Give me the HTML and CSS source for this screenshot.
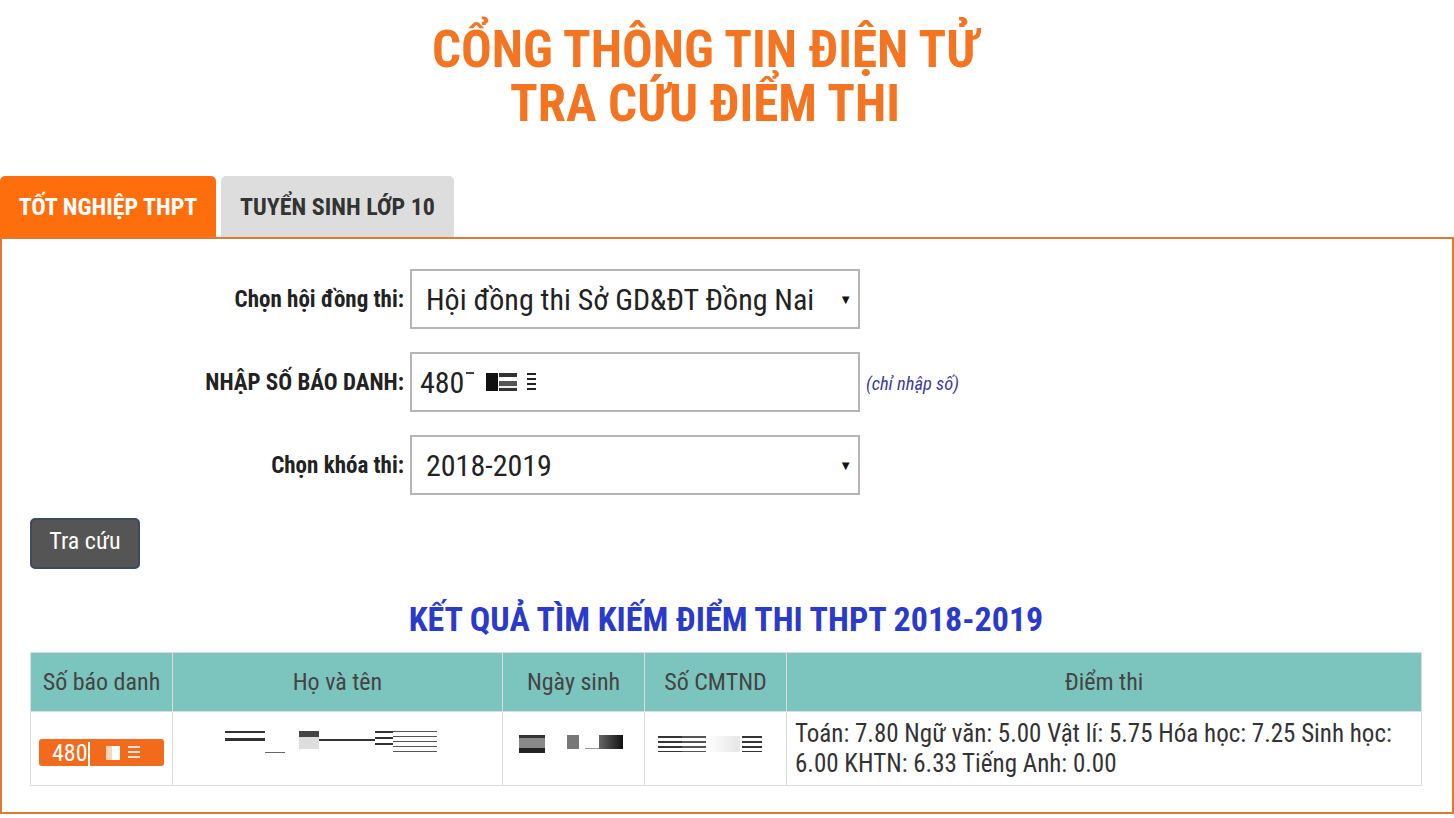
FILE: index.html
```html
<!DOCTYPE html>
<html lang="vi">
<head>
<meta charset="utf-8">
<title>Tra cứu điểm thi</title>
<link rel="stylesheet" href="styles.css">
</head>
<body>
<header class="site-title">
  <h1>CỔNG THÔNG TIN ĐIỆN TỬ<br>TRA CỨU ĐIỂM THI</h1>
</header>

<nav class="tabs">
  <a class="tab tab-active">TỐT NGHIỆP THPT</a>
  <a class="tab tab-idle">TUYỂN SINH LỚP 10</a>
</nav>

<section class="panel">
  <form class="form-grid">
    <label class="label">Chọn hội đồng thi:</label>
    <div class="select-wrap">
      <select class="control">
        <option>Hội đồng thi Sở GD&amp;ĐT Đồng Nai</option>
      </select>
    </div>
    <span></span>

    <label class="label">NHẬP SỐ BÁO DANH:</label>
    <div class="control field">480<span class="mark-bar"></span><span class="blk blk-a"></span><span class="blk blk-b"></span><span class="blk blk-c"></span></div>
    <span class="hint">(chỉ nhập số)</span>

    <label class="label">Chọn khóa thi:</label>
    <div class="select-wrap">
      <select class="control">
        <option>2018-2019</option>
      </select>
    </div>
    <span></span>
  </form>

  <button class="btn" type="button">Tra cứu</button>

  <h2 class="result-title">KẾT QUẢ TÌM KIẾM ĐIỂM THI THPT 2018-2019</h2>

  <table class="result">
    <thead>
      <tr>
        <th class="c1">Số báo danh</th>
        <th class="c2">Họ và tên</th>
        <th class="c3">Ngày sinh</th>
        <th class="c4">Số CMTND</th>
        <th class="c5">Điểm thi</th>
      </tr>
    </thead>
    <tbody>
      <tr>
        <td class="center"><span class="badge">480<span class="badge-cut"></span><span class="bw bw1"></span><span class="bw bw2"></span></span></td>
        <td class="center"><span class="redact name"><i class="r r1"></i><i class="r r2"></i><i class="r r3"></i><i class="r r4"></i><i class="r r5"></i><i class="r r6"></i></span></td>
        <td class="center"><span class="redact dob"><i class="r d1"></i><i class="r d2"></i><i class="r d3"></i><i class="r d4"></i></span></td>
        <td class="center"><span class="redact id"><i class="r i1"></i><i class="r i2"></i><i class="r i3"></i><i class="r i4"></i></span></td>
        <td class="scores">Toán: 7.80 Ngữ văn: 5.00 Vật lí: 5.75 Hóa học: 7.25 Sinh học: 6.00 KHTN: 6.33 Tiếng Anh: 0.00</td>
      </tr>
    </tbody>
  </table>
</section>
</body>
</html>
```

FILE: styles.css
```css
* { box-sizing: border-box; }

html, body {
  margin: 0;
  padding: 0;
  background: #fff;
}

body {
  font-family: "Roboto Condensed", "Liberation Sans Narrow", Roboto, sans-serif;
  color: #222;
  width: 1454px;
  overflow: hidden;
}

.site-title {
  padding: 23px 44px 0 0;
  text-align: center;
}

.site-title h1 {
  margin: 0;
  font-size: 51px;
  line-height: 54px;
  font-weight: 700;
  color: #f47521;
}

.tabs {
  display: flex;
  gap: 5px;
  margin-top: 45px;
  height: 61px;
}

.tab {
  display: flex;
  align-items: center;
  justify-content: center;
  height: 61px;
  font-size: 24px;
  font-weight: 700;
  border-radius: 5px 5px 0 0;
}

.tab-active {
  width: 216px;
  background: #ff6e0c;
  color: #fff;
}

.tab-idle {
  width: 233px;
  background: #dddddd;
  color: #333;
}

.panel {
  border: 2px solid #e07934;
  height: 577px;
  padding: 30px 30px 0 28px;
}

.form-grid {
  display: grid;
  grid-template-columns: 374px 450px auto;
  column-gap: 6px;
  row-gap: 23px;
  align-items: center;
}

.label {
  text-align: right;
  font-size: 23px;
  font-weight: 700;
  color: #222;
}

.select-wrap {
  position: relative;
}

.select-wrap::after {
  content: "▼";
  position: absolute;
  right: 8px;
  top: 50%;
  transform: translateY(-50%);
  font-size: 13px;
  color: #111;
  pointer-events: none;
}

.control {
  display: flex;
  align-items: center;
  width: 450px;
  height: 60px;
  border: 2px solid #b5b5b5;
  background: #fff;
  padding: 0 14px;
  font-family: inherit;
  font-size: 30px;
  color: #222;
  appearance: none;
  -webkit-appearance: none;
  border-radius: 0;
  margin: 0;
}

.field {
  padding-left: 8px;
}

.mark-bar {
  display: inline-block;
  width: 8px;
  height: 2px;
  background: #444;
  margin: 0 0 18px 2px;
}

.blk {
  display: inline-block;
  height: 18px;
}

.blk-a {
  width: 12px;
  margin-left: 12px;
  background: #111;
}

.blk-b {
  width: 18px;
  margin-left: 1px;
  background: linear-gradient(#333 0 25%, #fff 25% 45%, #555 45% 70%, #eee 70% 85%, #333 85%);
}

.blk-c {
  width: 9px;
  margin-left: 10px;
  background: repeating-linear-gradient(#222 0 2px, #fff 2px 5px);
}

.hint {
  font-size: 18.5px;
  font-style: italic;
  color: #3b3b9e;
  padding-top: 4px;
}

.btn {
  display: block;
  margin-top: 23px;
  width: 110px;
  height: 51px;
  background: #555;
  color: #fff;
  border: 2px solid #3c4c5c;
  border-radius: 5px;
  font-family: inherit;
  font-size: 24px;
  padding: 0 0 5px;
}

.result-title {
  margin: 30px 0 0;
  height: 53px;
  text-align: center;
  font-size: 34px;
  line-height: 40px;
  font-weight: 700;
  color: #2b3bc9;
}

.result {
  width: 1391px;
  border-collapse: collapse;
  table-layout: fixed;
}

.result th,
.result td {
  border: 1px solid #dcdcdc;
}

.result th {
  height: 59px;
  background: #7cc5be;
  color: #444;
  font-size: 24px;
  font-weight: 400;
  text-align: center;
}

.c1 { width: 142px; }
.c2 { width: 330px; }
.c3 { width: 142px; }
.c4 { width: 142px; }
.c5 { width: 635px; }

.result td {
  height: 73px;
  color: #333;
  font-size: 24px;
}

.center { text-align: center; }

.result td.scores {
  padding: 7px 8px 6px;
  font-size: 25px;
  line-height: 30px;
  vertical-align: top;
}

.badge {
  display: inline-flex;
  align-items: center;
  width: 125px;
  height: 27px;
  background: #f26b1d;
  border-radius: 3px;
  color: #fff;
  font-size: 24px;
  padding-left: 13px;
  position: relative;
  top: 4px;
}

.badge-cut {
  display: inline-block;
  width: 2px;
  height: 27px;
  background: #fff;
  position: relative;
  top: 3px;
}

.bw {
  display: inline-block;
  height: 14px;
}

.bw1 {
  width: 14px;
  margin-left: 16px;
  background: linear-gradient(90deg, #f6d7bd 0 40%, #fff 40%);
}

.bw2 {
  width: 12px;
  margin-left: 8px;
  background: repeating-linear-gradient(#fbe3d0 0 2px, #f26b1d 2px 5px);
}

.redact {
  display: inline-flex;
  align-items: flex-start;
  height: 24px;
  position: relative;
  top: -10px;
}

.r {
  display: inline-block;
}

.name { width: 226px; top: -12px; }
.r1 { width: 40px; height: 10px; border-top: 2px solid #333; background: linear-gradient(transparent 5px, #333 5px); }
.r2 { width: 20px; height: 12px; margin-top: 10px; border-bottom: 1px solid #666; }
.r3 { width: 20px; height: 18px; margin-left: 14px; background: linear-gradient(#444 0 35%, #ddd 35%); }
.r4 { width: 56px; height: 2px; margin-top: 8px; background: #333; }
.r5 { width: 18px; height: 18px; background: repeating-linear-gradient(#333 0 2px, #fff 2px 6px); }
.r6 { width: 44px; height: 22px; background: repeating-linear-gradient(#555 0 1px, #fff 1px 5px); }

.dob { width: 110px; top: -4px; }
.d1 { width: 26px; height: 18px; background: linear-gradient(#333 0 15%, #888 15% 70%, #222 70%); }
.d2 { width: 12px; height: 14px; margin-left: 22px; background: #777; }
.d3 { width: 14px; height: 14px; margin-left: 6px; border-bottom: 1px solid #999; }
.d4 { width: 24px; height: 14px; background: linear-gradient(90deg, #666, #111); }

.id { width: 116px; top: -4px; }
.i1 { width: 24px; height: 16px; background: repeating-linear-gradient(#333 0 2px, #fff 2px 5px); }
.i2 { width: 24px; height: 16px; background: repeating-linear-gradient(#555 0 2px, #fff 2px 5px); }
.i3 { width: 34px; height: 16px; background: linear-gradient(90deg, #fff, #e6e6e6); }
.i4 { width: 20px; height: 16px; margin-left: 2px; background: repeating-linear-gradient(#333 0 2px, #fff 2px 5px); }
```
